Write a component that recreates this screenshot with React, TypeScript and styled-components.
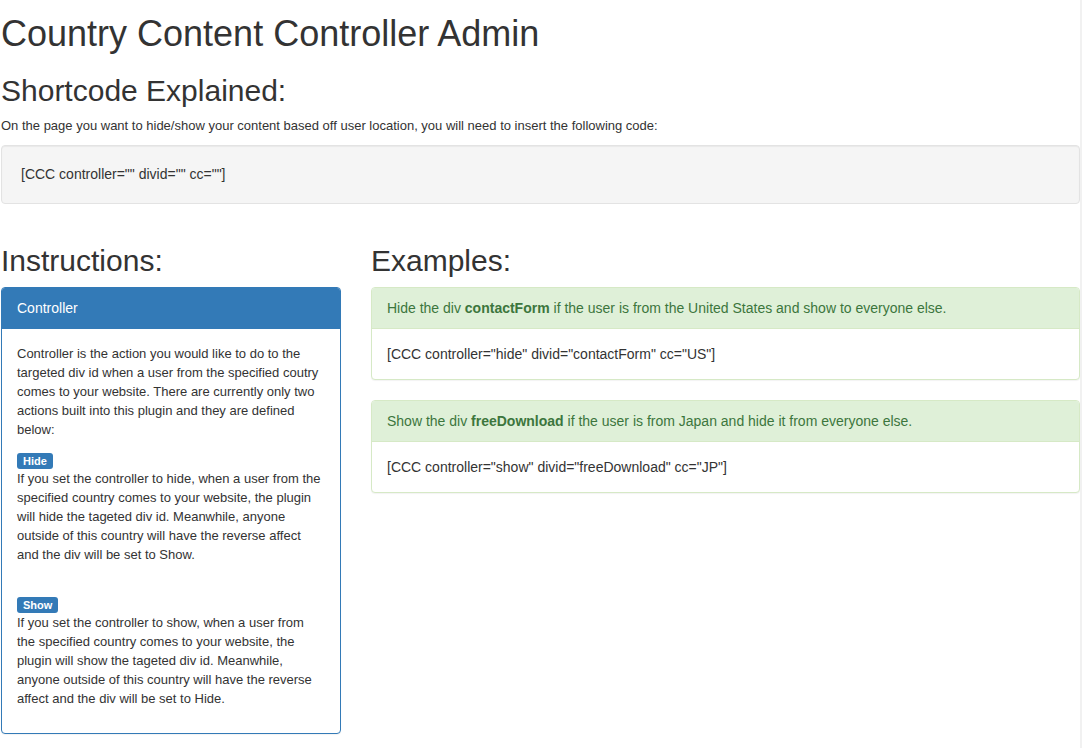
import React from "react";
import styled, { createGlobalStyle } from "styled-components";

const GlobalStyle = createGlobalStyle`
  html, body {
    margin: 0;
    padding: 0;
    background: #f1f1f1;
  }
  body {
    font-family: "Liberation Sans", Arial, Helvetica, sans-serif;
    font-size: 13px;
    line-height: 1.42857;
    color: #333;
  }
  * {
    box-sizing: border-box;
  }
`;

const Page = styled.div`
  width: 1080px;
  min-height: 100vh;
  background: #fff;
  padding: 1px 0 0 1px;
  overflow: hidden;
`;

const Title = styled.h1`
  font-size: 36px;
  font-weight: 500;
  line-height: 1.1;
  margin: 13px 0 0 0;
  color: #333;
`;

const Heading = styled.h2`
  font-size: 30px;
  font-weight: 500;
  line-height: 1.1;
  margin: 20px 0 10px;
  color: #333;
`;

const Lead = styled.p`
  margin: 0 0 10px;
`;

const Well = styled.div`
  min-height: 20px;
  padding: 19px;
  margin-bottom: 20px;
  background: #f5f5f5;
  border: 1px solid #e3e3e3;
  border-radius: 4px;
  box-shadow: inset 0 1px 1px rgba(0, 0, 0, 0.05);
  font-size: 14px;
  line-height: 19px;
`;

const Columns = styled.div`
  display: grid;
  grid-template-columns: 340px 1fr;
  column-gap: 30px;
`;

const Column = styled.div`
  min-width: 0;
`;

type Tone = "primary" | "success";

const tones = {
  primary: { border: "#337ab7", bg: "#337ab7", color: "#fff" },
  success: { border: "#d6e9c6", bg: "#dff0d8", color: "#3c763d" },
};

const Panel = styled.div<{ $tone: Tone }>`
  margin-bottom: 20px;
  background: #fff;
  border: 1px solid ${(p) => tones[p.$tone].border};
  border-radius: 4px;
  box-shadow: 0 1px 1px rgba(0, 0, 0, 0.05);
`;

const PanelHeading = styled.div<{ $tone: Tone }>`
  padding: 10px 15px;
  background: ${(p) => tones[p.$tone].bg};
  color: ${(p) => tones[p.$tone].color};
  border-bottom: 1px solid ${(p) => tones[p.$tone].border};
  border-radius: 3px 3px 0 0;
  font-size: 14px;
  line-height: 20px;

  b {
    font-weight: 700;
  }
`;

const PanelBody = styled.div`
  padding: 15px;
  line-height: 19px;
`;

const ExampleBody = styled.div`
  padding: 15px;
  font-size: 14px;
  line-height: 20px;
`;

const Block = styled.p<{ $gap?: number }>`
  margin: ${(p) => p.$gap ?? 0}px 0 10px;
`;

const LabelRow = styled.span`
  display: flex;
  align-items: flex-end;
  height: 20px;
`;

const Label = styled.span`
  display: inline-block;
  height: 16px;
  padding: 0 6px;
  background: #337ab7;
  color: #fff;
  border-radius: 3px;
  font-size: 11px;
  font-weight: 700;
  line-height: 16px;
`;

const examples = [
  {
    before: "Hide the div ",
    id: "contactForm",
    after: " if the user is from the United States and show to everyone else.",
    code: '[CCC controller="hide" divid="contactForm" cc="US"]',
  },
  {
    before: "Show the div ",
    id: "freeDownload",
    after: " if the user is from Japan and hide it from everyone else.",
    code: '[CCC controller="show" divid="freeDownload" cc="JP"]',
  },
];

export default function App() {
  return (
    <>
      <GlobalStyle />
      <Page>
        <Title>Country Content Controller Admin</Title>
        <Heading>Shortcode Explained:</Heading>
        <Lead>
          On the page you want to hide/show your content based off user location, you will
          need to insert the following code:
        </Lead>
        <Well>[CCC controller="" divid="" cc=""]</Well>

        <Columns>
          <Column>
            <Heading>Instructions:</Heading>
            <Panel $tone="primary">
              <PanelHeading $tone="primary">Controller</PanelHeading>
              <PanelBody>
                <Block>
                  Controller is the action you would like to do to the targeted div id when
                  a user from the specified coutry comes to your website. There are
                  currently only two actions built into this plugin and they are defined
                  below:
                </Block>
                <Block>
                  <LabelRow>
                    <Label>Hide</Label>
                  </LabelRow>
                  If you set the controller to hide, when a user from the specified country
                  comes to your website, the plugin will hide the tageted div id. Meanwhile,
                  anyone outside of this country will have the reverse affect and the div
                  will be set to Show.
                </Block>
                <Block $gap={29}>
                  <LabelRow>
                    <Label>Show</Label>
                  </LabelRow>
                  If you set the controller to show, when a user from the specified country
                  comes to your website, the plugin will show the tageted div id. Meanwhile,
                  anyone outside of this country will have the reverse affect and the div
                  will be set to Hide.
                </Block>
              </PanelBody>
            </Panel>
          </Column>

          <Column>
            <Heading>Examples:</Heading>
            {examples.map((ex) => (
              <Panel $tone="success" key={ex.id}>
                <PanelHeading $tone="success">
                  {ex.before}
                  <b>{ex.id}</b>
                  {ex.after}
                </PanelHeading>
                <ExampleBody>{ex.code}</ExampleBody>
              </Panel>
            ))}
          </Column>
        </Columns>
      </Page>
    </>
  );
}
